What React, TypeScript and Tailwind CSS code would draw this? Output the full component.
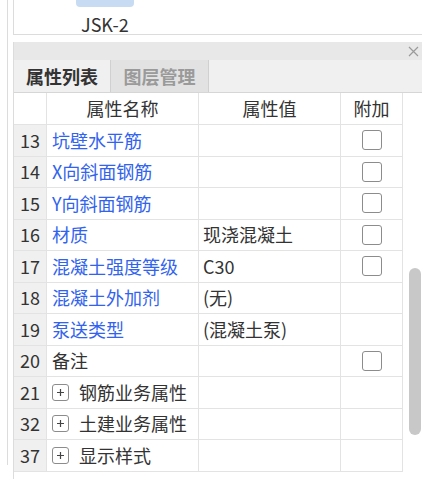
import React from 'react';

interface Row {
  no: number;
  name: string;
  value?: string;
  blue?: boolean;
  check?: boolean;
  group?: boolean;
}

const rows: Row[] = [
  { no: 13, name: '坑壁水平筋', blue: true, check: true },
  { no: 14, name: 'X向斜面钢筋', blue: true, check: true },
  { no: 15, name: 'Y向斜面钢筋', blue: true, check: true },
  { no: 16, name: '材质', value: '现浇混凝土', blue: true, check: true },
  { no: 17, name: '混凝土强度等级', value: 'C30', blue: true, check: true },
  { no: 18, name: '混凝土外加剂', value: '(无)', blue: true },
  { no: 19, name: '泵送类型', value: '(混凝土泵)', blue: true },
  { no: 20, name: '备注', check: true },
  { no: 21, name: '钢筋业务属性', group: true },
  { no: 32, name: '土建业务属性', group: true },
  { no: 37, name: '显示样式', group: true },
];

const Checkbox = () => (
  <div className="w-[20px] h-[20px] shrink-0 rounded-[3px] border-[1.5px] border-[#8c8c8c] bg-white" />
);

const PlusBox = () => (
  <div className="w-[17px] h-[17px] shrink-0 rounded-[3px] border border-[#8c8c8c] flex items-center justify-center mr-[10px]">
    <svg width="9" height="9" viewBox="0 0 9 9">
      <path d="M4.5 1v7M1 4.5h7" stroke="#444" strokeWidth="1.2" />
    </svg>
  </div>
);

const App = () => {
  return (
    <div className="w-[422px] h-[479px] bg-white flex overflow-hidden font-['Noto_Sans_CJK_SC',sans-serif] text-[#333]">
      <div className="w-[7px]" />
      <div className="w-[6px] h-[465px] border-l border-[#dcdcdc]" />

      <div className="flex-1 flex flex-col">
        {/* top panel */}
        <div className="h-[35px] border-l border-b border-[#dcdcdc] flex flex-col">
          <div className="ml-[62px] w-[58px] h-[7px] rounded-b-[4px] bg-[#c7dcf2]" />
          <div className="ml-[67px] mt-[8px] text-[18px] leading-[19px]">JSK-2</div>
        </div>

        <div className="h-[7px]" />

        {/* property panel */}
        <div className="flex-1 flex flex-col border-l border-[#dcdcdc]">
          <div className="h-[18px] bg-[#e8e8e8] flex items-center justify-end pr-[3px]">
            <svg width="11" height="11" viewBox="0 0 11 11">
              <path d="M1 1l9 9M10 1l-9 9" stroke="#9a9a9a" strokeWidth="1.2" />
            </svg>
          </div>

          <div className="h-[33px] bg-[#f0f0f0] flex border-b border-[#d6d6d6]">
            <div className="w-[97px] flex items-center justify-center text-[18px] font-bold text-[#333] border-r border-[#d0d0d0]">
              属性列表
            </div>
            <div className="w-[98px] flex items-center justify-center text-[18px] font-bold text-[#9a9a9a] bg-[#e2e2e2] border-r border-[#d0d0d0]">
              图层管理
            </div>
          </div>

          <div className="flex">
            <div className="w-[389px] flex flex-col text-[18px]">
              {/* header */}
              <div className="h-[32px] flex border-b border-[#e3e3e3]">
                <div className="w-[33px] border-r border-[#e3e3e3]" />
                <div className="w-[152px] border-r border-[#e3e3e3] flex items-center justify-center">属性名称</div>
                <div className="w-[142px] border-r border-[#e3e3e3] flex items-center justify-center">属性值</div>
                <div className="w-[62px] border-r border-[#e3e3e3] flex items-center justify-center">附加</div>
              </div>

              {rows.map(r => (
                <div key={r.no} className="h-[31.5px] flex border-b border-[#e3e3e3]">
                  <div className="w-[33px] bg-[#f0f0f0] border-r border-[#e3e3e3] flex items-center justify-end pr-[6px]">
                    {r.no}
                  </div>
                  <div
                    className={`w-[152px] border-r border-[#e3e3e3] flex items-center pl-[5px] whitespace-nowrap ${
                      r.blue ? 'text-[#3163ee]' : 'text-[#333]'
                    }`}
                  >
                    {r.group && <PlusBox />}
                    {r.name}
                  </div>
                  <div className="w-[142px] border-r border-[#e3e3e3] flex items-center pl-[4px] whitespace-nowrap">
                    {r.value}
                  </div>
                  <div className="w-[62px] border-r border-[#e3e3e3] flex items-center justify-center">
                    {r.check && <Checkbox />}
                  </div>
                </div>
              ))}
            </div>

            {/* scrollbar */}
            <div className="flex-1 pl-[6px] pt-[175px]">
              <div className="w-[12px] h-[167px] rounded-full bg-[#c8c8c8]" />
            </div>
          </div>
        </div>
      </div>
    </div>
  );
};

export default App;
